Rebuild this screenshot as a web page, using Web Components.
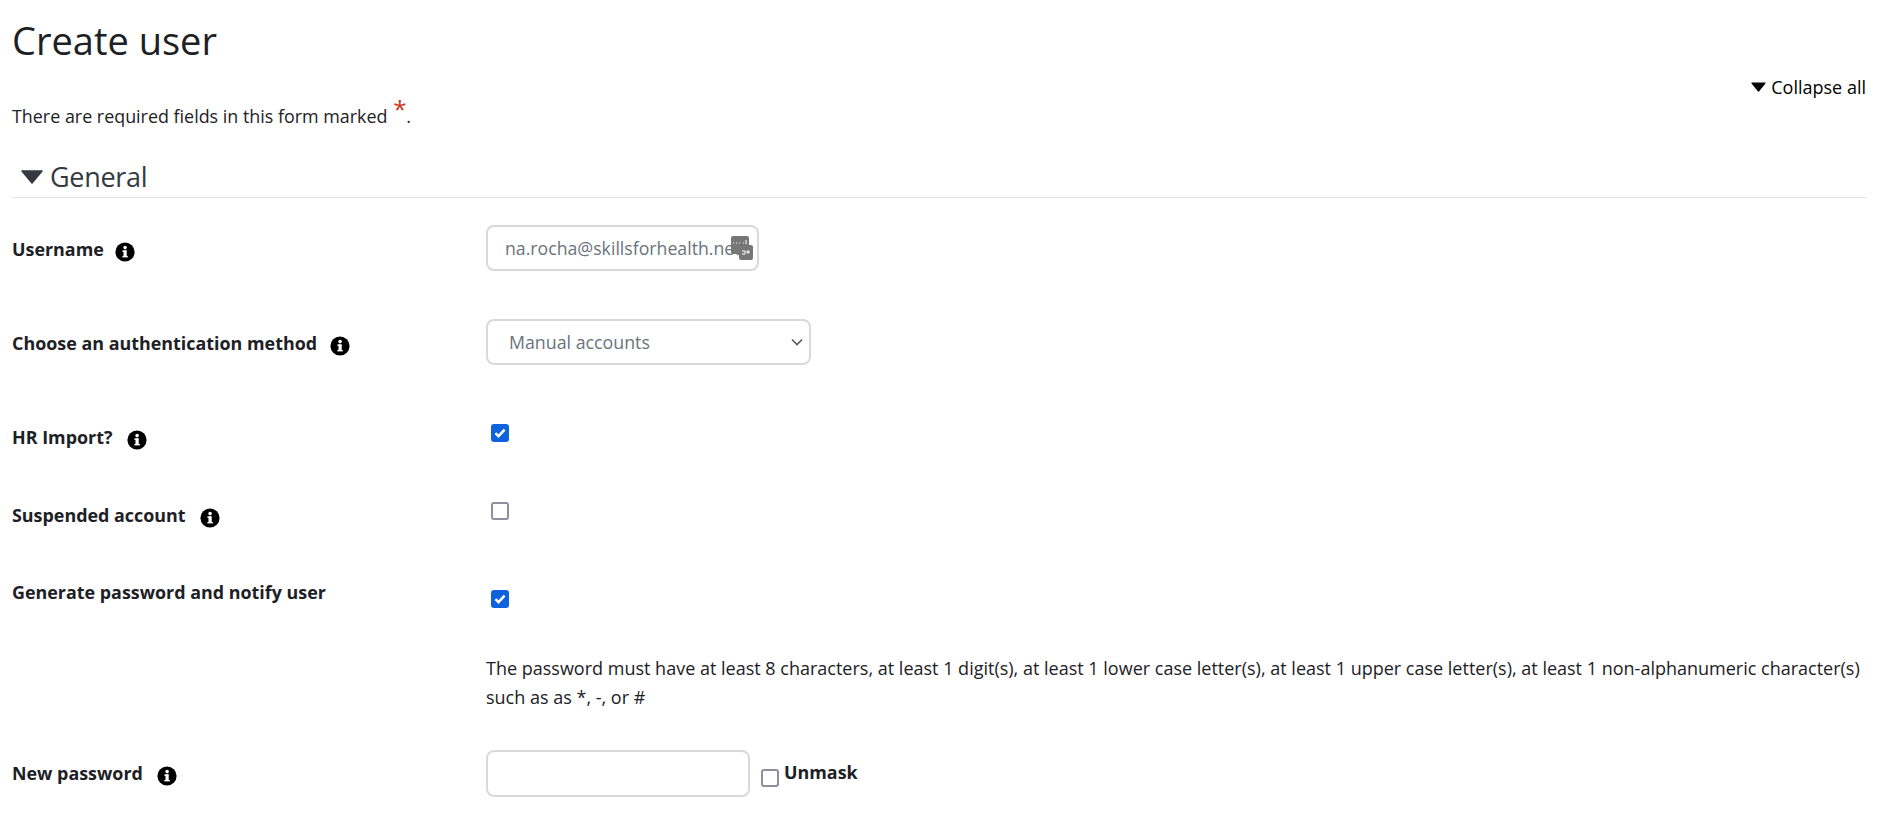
<!DOCTYPE html>
<html>
<head>
<meta charset="utf-8">
<title>Create user</title>
<style>
    html, body { margin: 0; background: #fff; }
    body {
        font-family: "Open Sans", "Noto Sans", sans-serif;
        font-size: 17.3px;
        color: #1d2125;
        overflow: hidden;
    }
</style>
</head>
<body>
<user-form></user-form>

<script>
class infoIcon extends HTMLElement {
    constructor() {
        super();
        this.attachShadow({ mode: "open" }).innerHTML = `
            <style>
                :host { display: inline-flex; width: 20px; height: 20px; }
            </style>
            <svg width="20" height="20" viewBox="0 0 20 20">
                <circle cx="10" cy="10" r="9.6" fill="#000"/>
                <rect x="8.5" y="8.4" width="3.2" height="6.6" fill="#fff"/>
                <rect x="7.4" y="8.4" width="4" height="1.5" fill="#fff"/>
                <rect x="7.4" y="13.9" width="5.4" height="1.5" fill="#fff"/>
                <circle cx="10.1" cy="5.6" r="1.8" fill="#fff"/>
            </svg>
        `;
    }
}

class checkBox extends HTMLElement {
    constructor() {
        super();
        this.attachShadow({ mode: "open" });
    }

    connectedCallback() {
        const checked = this.hasAttribute("checked");
        this.shadowRoot.innerHTML = `
            <style>
                :host { display: block; width: 18px; height: 18px; }
                .box {
                    box-sizing: border-box;
                    width: 18px;
                    height: 18px;
                    border-radius: 3px;
                    border: 2px solid ${checked ? "#0f62de" : "#8f8d9e"};
                    background: ${checked ? "#0f62de" : "#fff"};
                    display: flex;
                }
            </style>
            <div class="box">
                ${checked ? `<svg width="14" height="14" viewBox="0 0 14 14"><path d="M2.4 7.2 5.5 10.2 11.6 3.6" fill="none" stroke="#fff" stroke-width="2.5"/></svg>` : ""}
            </div>
        `;
    }
}

class textField extends HTMLElement {
    constructor() {
        super();
        this.attachShadow({ mode: "open" }).innerHTML = `
            <style>
                :host {
                    display: block;
                    box-sizing: border-box;
                    position: relative;
                    height: 46px;
                    border: 2px solid #d9d9dd;
                    border-radius: 8px;
                    background: #fff;
                    color: #6a737b;
                    font-size: 17.7px;
                }
                .value {
                    height: 100%;
                    padding: 0 17px;
                    display: flex;
                    align-items: center;
                    overflow: hidden;
                    white-space: nowrap;
                }
                ::slotted(svg) { position: absolute; right: 4px; top: 9px; }
            </style>
            <div class="value"><slot></slot></div>
            <slot name="badge"></slot>
        `;
    }
}

class selectField extends HTMLElement {
    constructor() {
        super();
        this.attachShadow({ mode: "open" }).innerHTML = `
            <style>
                :host {
                    display: block;
                    box-sizing: border-box;
                    height: 46px;
                    border: 2px solid #d9d9dd;
                    border-radius: 8px;
                    background: #fff;
                    color: #6a737b;
                    font-size: 17.8px;
                }
                .value {
                    height: 100%;
                    padding: 0 6px 0 21px;
                    display: flex;
                    align-items: center;
                    justify-content: space-between;
                }
            </style>
            <div class="value">
                <slot></slot>
                <svg width="12" height="8" viewBox="0 0 12 8"><path d="M1 1.5 6 6.5 11 1.5" fill="none" stroke="#555b61" stroke-width="1.6"/></svg>
            </div>
        `;
    }
}

class formRow extends HTMLElement {
    constructor() {
        super();
        this.attachShadow({ mode: "open" });
    }

    connectedCallback() {
        const help = this.hasAttribute("help");
        this.shadowRoot.innerHTML = `
            <style>
                :host { display: grid; grid-template-columns: 474px 1fr; }
                .label {
                    display: flex;
                    align-items: flex-start;
                    gap: var(--icon-gap, 14px);
                    padding-top: var(--label-top, 0);
                    font-weight: 700;
                    color: #1d2125;
                    font-size: 17.9px;
                    line-height: 24px;
                }
                info-icon { margin-top: 5px; }
            </style>
            <div class="label">
                <span>${this.getAttribute("label")}</span>
                ${help ? "<info-icon></info-icon>" : ""}
            </div>
            <div><slot></slot></div>
        `;
    }
}

class userForm extends HTMLElement {
    constructor() {
        super();
        this.attachShadow({ mode: "open" }).innerHTML = `
            <style>
                :host { display: block; padding: 0 14px 0 12px; }
                h1 {
                    margin: 0;
                    padding-top: 15px;
                    font-size: 38px;
                    font-weight: 400;
                    line-height: 50px;
                    color: #1d2125;
                }
                .top {
                    display: flex;
                    justify-content: space-between;
                    align-items: flex-start;
                    margin-top: 9px;
                }
                .required { padding-top: 30px; line-height: 24px; font-size: 17.9px; }
                .required b { color: #ca3120; font-weight: 400; font-size: 24px; line-height: 0; position: relative; top: -5px; margin: 0 0 0 1px; }
                .collapse {
                    display: flex;
                    align-items: center;
                    gap: 5px;
                    color: #000;
                    font-size: 18px;
                    line-height: 24px;
                    padding-top: 1px;
                }
                .section {
                    display: flex;
                    align-items: center;
                    gap: 7px;
                    margin-top: 28px;
                    padding: 0 0 0 9px;
                    height: 41px;
                    border-bottom: 1px solid #dee2e6;
                    font-size: 27px;
                    letter-spacing: -0.3px;
                    color: #343a40;
                }
                .rows { padding-top: 27px; }
                .hint { font-size: 18px; line-height: 29px; color: #1d2125; margin-top: 46px; }
                .pw { display: flex; align-items: flex-start; }
                .pw check-box { margin: 19px 5px 0 11px; }
                .pw span { font-weight: 700; font-size: 17.9px; line-height: 24px; margin-top: 10px; }
                .tick { padding-left: 5px; }
            </style>

            <h1>Create user</h1>
            <div class="top">
                <div class="required">There are required fields in this form marked <b>*</b>.</div>
                <div class="collapse">
                    <svg width="15" height="10" viewBox="0 0 15 10"><path d="M1 1H14L7.5 9Z" fill="#000" stroke="#000" stroke-width="1.2" stroke-linejoin="round"/></svg>
                    <span>Collapse all</span>
                </div>
            </div>
            <div class="section">
                <svg width="22" height="14" viewBox="0 0 22 14"><path d="M1 1H21L11 13Z" fill="#343a40" stroke="#343a40" stroke-width="1.5" stroke-linejoin="round"/></svg>
                <span>General</span>
            </div>

            <div class="rows">
                <form-row label="Username" help style="height:94px; --label-top:12px; --icon-gap:11px">
                    <text-field style="width:273px">na.rocha@skillsforhealth.net
                        <svg slot="badge" width="22" height="25" viewBox="0 0 22 25">
                            <rect x="0" y="0" width="18" height="18" rx="2" fill="#777"/>
                            <rect x="8" y="9" width="14" height="15" rx="2" fill="#777"/>
                            <path d="M2 7h1M5 7h1M8 7h1M12 7h1M15 4v4" stroke="#fff" fill="none"/>
                            <path d="M11 15h3v3h-3M15 16h4M17 14v4" stroke="#fff" fill="none"/>
                        </svg>
                    </text-field>
                </form-row>
                <form-row label="Choose an authentication method" help style="height:105px; --label-top:12px; --icon-gap:13px">
                    <select-field style="width:325px">Manual accounts</select-field>
                </form-row>
                <form-row label="HR Import?" help style="height:78px; --label-top:1px; --icon-gap:15px">
                    <div class="tick"><check-box checked></check-box></div>
                </form-row>
                <form-row label="Suspended account" help style="height:78px; --label-top:1px">
                    <div class="tick"><check-box></check-box></div>
                </form-row>
                <form-row label="Generate password and notify user" style="height:170px">
                    <div class="tick" style="padding-top:10px"><check-box checked></check-box></div>
                    <div class="hint">The password must have at least 8 characters, at least 1 digit(s), at least 1 lower case letter(s), at least 1 upper case letter(s), at least 1 non-alphanumeric character(s) such as as *, -, or #</div>
                </form-row>
                <form-row label="New password" help style="--label-top:11px">
                    <div class="pw">
                        <text-field style="width:264px; height:47px"></text-field>
                        <check-box></check-box>
                        <span>Unmask</span>
                    </div>
                </form-row>
            </div>
        `;
    }
}

window.customElements.define("info-icon", infoIcon);
window.customElements.define("check-box", checkBox);
window.customElements.define("text-field", textField);
window.customElements.define("select-field", selectField);
window.customElements.define("form-row", formRow);
window.customElements.define("user-form", userForm);
</script>
</body>
</html>
